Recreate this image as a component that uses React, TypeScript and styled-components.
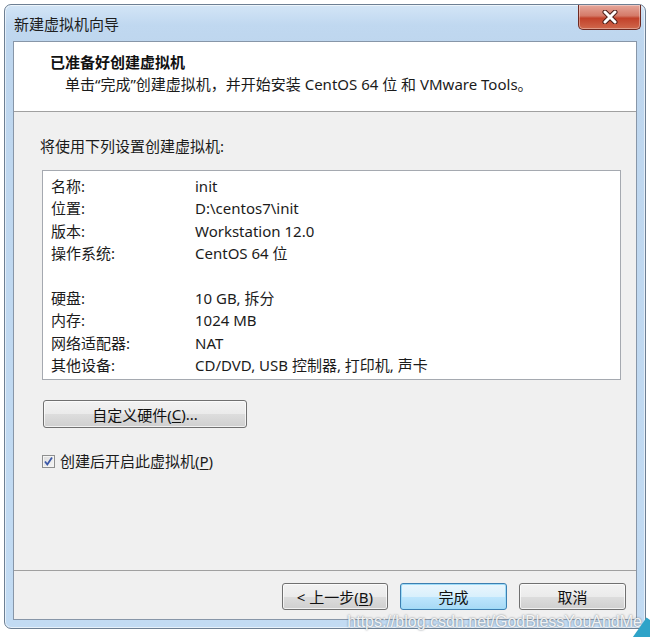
import React from "react";
import styled, { createGlobalStyle } from "styled-components";

const GlobalStyle = createGlobalStyle`
  html, body {
    margin: 0;
    padding: 0;
    background: #ffffff;
  }
  body {
    font-family: "Noto Sans", "Noto Sans CJK SC", sans-serif;
    font-size: 15px;
    color: #1b1b1b;
  }
`;

type Setting = { label: string; value: string };

const settings: (Setting | null)[] = [
  { label: "名称:", value: "init" },
  { label: "位置:", value: "D:\\centos7\\init" },
  { label: "版本:", value: "Workstation 12.0" },
  { label: "操作系统:", value: "CentOS 64 位" },
  null,
  { label: "硬盘:", value: "10 GB, 拆分" },
  { label: "内存:", value: "1024 MB" },
  { label: "网络适配器:", value: "NAT" },
  { label: "其他设备:", value: "CD/DVD, USB 控制器, 打印机, 声卡" },
];

export default function App() {
  return (
    <>
      <GlobalStyle />
      <Desktop>
        <Window>
          <TitleBar>
            <WindowTitle>新建虚拟机向导</WindowTitle>
            <CloseButton aria-label="close">
              <svg width="18" height="14" viewBox="0 0 18 14">
                <path
                  d="M4 2 L14 12 M14 2 L4 12"
                  fill="none"
                  stroke="#4a1d17"
                  strokeWidth="5"
                  strokeLinecap="round"
                />
                <path
                  d="M4 2 L14 12 M14 2 L4 12"
                  fill="none"
                  stroke="#ffffff"
                  strokeWidth="3"
                  strokeLinecap="round"
                />
              </svg>
            </CloseButton>
          </TitleBar>

          <Client>
            <Header>
              <HeaderTitle>已准备好创建虚拟机</HeaderTitle>
              <HeaderText>
                单击“完成”创建虚拟机，并开始安装 CentOS 64 位 和 VMware Tools。
              </HeaderText>
            </Header>

            <Body>
              <Intro>将使用下列设置创建虚拟机:</Intro>
              <SettingsList>
                {settings.map((s, i) =>
                  s ? (
                    <SettingRow key={i}>
                      <span>{s.label}</span>
                      <span>{s.value}</span>
                    </SettingRow>
                  ) : (
                    <SettingRow key={i} />
                  )
                )}
              </SettingsList>

              <HardwareButton $width={204}>
                自定义硬件(<u>C</u>)...
              </HardwareButton>

              <CheckRow>
                <CheckBox>
                  <svg width="11" height="11" viewBox="0 0 11 11">
                    <path
                      d="M2 5.5 L4.3 8.5 L9 1.5"
                      fill="none"
                      stroke="#3b58a8"
                      strokeWidth="1.8"
                    />
                  </svg>
                </CheckBox>
                <span>
                  创建后开启此虚拟机(<u>P</u>)
                </span>
              </CheckRow>
            </Body>

            <Footer>
              <PushButton $width={106}>
                &lt; 上一步(<u>B</u>)
              </PushButton>
              <PushButton $width={107} $default>
                完成
              </PushButton>
              <PushButton $width={107}>取消</PushButton>
            </Footer>
          </Client>

          <Watermark>https://blog.csdn.net/GodBlessYouAndMe</Watermark>
        </Window>
        <DesktopCorner />
      </Desktop>
    </>
  );
}

const Desktop = styled.div`
  position: relative;
  width: 650px;
  height: 637px;
  overflow: hidden;
  padding: 4px 0 0 4px;
  box-sizing: border-box;
`;

const DesktopCorner = styled.div`
  position: absolute;
  right: -14px;
  bottom: -14px;
  width: 28px;
  height: 28px;
  background: #2fa3c8;
  transform: rotate(35deg);
`;

const Window = styled.div`
  position: relative;
  width: 642px;
  height: 625px;
  box-sizing: border-box;
  border: 1px solid #6d7f93;
  border-radius: 7px;
  background: linear-gradient(
    to bottom,
    #d3e5f6 0px,
    #c0d8f0 20px,
    #bed6ee 40px,
    #c2dbf3 100%
  );
  padding: 0 8px 8px 8px;
  display: flex;
  flex-direction: column;
  box-shadow: inset 0 0 0 1px rgba(255, 255, 255, 0.6);
`;

const TitleBar = styled.div`
  height: 36px;
  display: flex;
  justify-content: space-between;
  align-items: flex-start;
  margin-right: -4px;
`;

const WindowTitle = styled.div`
  padding: 8px 0 0 1px;
  font-size: 15px;
  color: #1e1e1e;
`;

const CloseButton = styled.div`
  width: 63px;
  height: 25px;
  box-sizing: border-box;
  border: 1px solid #6e2a22;
  border-top: none;
  border-radius: 0 0 5px 5px;
  background: linear-gradient(
    to bottom,
    #e6a79b 0%,
    #d47a68 45%,
    #c2412a 55%,
    #d0684c 100%
  );
  box-shadow: inset 0 0 0 1px rgba(255, 255, 255, 0.35);
  display: flex;
  align-items: center;
  justify-content: center;
`;

const Client = styled.div`
  flex: 1;
  border: 1px solid #8796a8;
  background: #f0f0f0;
  display: flex;
  flex-direction: column;
`;

const Header = styled.div`
  height: 70px;
  background: #ffffff;
  border-bottom: 1px solid #a0a0a0;
  padding: 10px 0 0 36px;
  box-sizing: border-box;
`;

const HeaderTitle = styled.div`
  font-weight: bold;
  font-size: 15px;
  line-height: 20px;
  color: #111;
`;

const HeaderText = styled.div`
  padding-left: 15px;
  margin-top: 2px;
  line-height: 20px;
  color: #1b1b1b;
`;

const Body = styled.div`
  flex: 1;
  padding: 24px 15px 0 26px;
  display: flex;
  flex-direction: column;
  align-items: flex-start;
`;

const Intro = styled.div`
  line-height: 20px;
`;

const SettingsList = styled.div`
  align-self: stretch;
  margin: 14px 0 19px 2px;
  height: 210px;
  box-sizing: border-box;
  border: 1px solid #a5a9b0;
  background: #ffffff;
  padding: 4px 8px;
`;

const SettingRow = styled.div`
  display: grid;
  grid-template-columns: 144px 1fr;
  height: 22.4px;
  line-height: 22.4px;
  white-space: nowrap;
`;

const PushButton = styled.div<{ $width: number; $default?: boolean }>`
  width: ${(p) => p.$width}px;
  height: 27px;
  box-sizing: border-box;
  border: 1px solid ${(p) => (p.$default ? "#3c7fb1" : "#707070")};
  border-radius: 3px;
  background: ${(p) =>
    p.$default
      ? "linear-gradient(to bottom, #eaf6fd 0%, #d9f0fc 50%, #bee6fd 51%, #a7d9f5 100%)"
      : "linear-gradient(to bottom, #f2f2f2 0%, #ebebeb 50%, #dddddd 51%, #cfcfcf 100%)"};
  box-shadow: inset 0 0 0 1px
    ${(p) => (p.$default ? "#9fdcf8" : "rgba(255,255,255,0.7)")};
  display: flex;
  align-items: center;
  justify-content: center;
  white-space: nowrap;
  color: #111;

  u {
    text-underline-offset: 2px;
  }
`;

const HardwareButton = styled(PushButton)`
  height: 28px;
  margin-left: 3px;
  margin-top: 1px;
`;

const CheckRow = styled.div`
  display: flex;
  align-items: center;
  gap: 5px;
  margin-top: 23px;
  line-height: 20px;
  u {
    text-underline-offset: 2px;
  }
`;

const CheckBox = styled.div`
  width: 13px;
  height: 13px;
  margin-left: 2px;
  box-sizing: border-box;
  border: 1px solid #8e8f8f;
  background: linear-gradient(135deg, #dcdcdc 0%, #f6f6f6 100%);
  box-shadow: inset 0 0 0 1px #f4f4f4;
  display: flex;
  align-items: center;
  justify-content: center;
`;

const Footer = styled.div`
  height: 49px;
  border-top: 1px solid #a0a0a0;
  box-sizing: border-box;
  display: flex;
  justify-content: flex-end;
  align-items: flex-start;
  gap: 12px;
  padding: 12px 10px 0 0;
`;

const Watermark = styled.div`
  position: absolute;
  right: 3px;
  bottom: -3px;
  font-family: "Liberation Sans", Arial, sans-serif;
  font-size: 16px;
  color: rgba(255, 255, 255, 0.9);
  text-shadow: 0 0 2px rgba(90, 100, 110, 0.9);
  white-space: nowrap;
`;
